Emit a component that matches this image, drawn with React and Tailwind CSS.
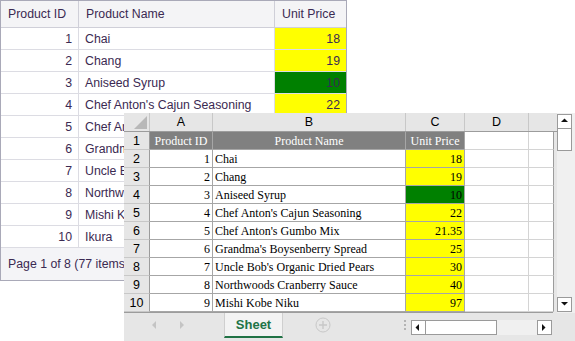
import React from 'react';

// rows shown in the data grid behind the spreadsheet
const gridRows = [
  { id: 1, name: 'Chai', price: 18 },
  { id: 2, name: 'Chang', price: 19 },
  { id: 3, name: 'Aniseed Syrup', price: 10 },
  { id: 4, name: "Chef Anton's Cajun Seasoning", price: 22 },
  { id: 5, name: "Chef Anton's Gumbo Mix", price: 21.35 },
  { id: 6, name: "Grandma's Boysenberry Spread", price: 25 },
  { id: 7, name: "Uncle Bob's Organic Dried Pears", price: 30 },
  { id: 8, name: 'Northwoods Cranberry Sauce', price: 40 },
  { id: 9, name: 'Mishi Kobe Niku', price: 97 },
  { id: 10, name: 'Ikura', price: 31 },
];

const sansFont = { fontFamily: '"Liberation Sans", Arial, sans-serif' };
const serifFont = { fontFamily: '"Liberation Serif", "Times New Roman", serif' };

function DataGrid() {
  return (
    <div className="w-[347px] border border-[#a9a9b8] bg-white text-[12.3px] leading-[15px] text-[#3b2a52]" style={sansFont}>
      <div className="flex h-[27px] border-b border-[#cfcfd8] bg-[#f4f4f6]">
        <div className="flex w-[78px] items-center border-r border-[#cfcfd8] px-[7px]">Product ID</div>
        <div className="flex w-[196px] items-center border-r border-[#cfcfd8] px-[7px]">Product Name</div>
        <div className="flex w-[71px] items-center px-[7px]">Unit Price</div>
      </div>
      {gridRows.map((row) => (
        <div key={row.id} className="flex h-[22px] border-b border-[#dcdce3]">
          <div className="flex w-[78px] items-center justify-end border-r border-[#dcdce3] px-[6px] pt-[1px]">{row.id}</div>
          <div className="flex w-[196px] items-center border-r border-[#dcdce3] px-[6px] pt-[1px]">{row.name}</div>
          <div
            className={`flex w-[71px] items-center justify-end px-[6px] pt-[1px] ${row.id === 3 ? 'bg-[#008000]' : 'bg-[#ffff00]'}`}
          >
            {row.price}
          </div>
        </div>
      ))}
      <div className="flex h-[32px] items-center bg-[#f4f4f7] px-[7px]">Page 1 of 8 (77 items)</div>
    </div>
  );
}

const cols = [
  { key: 'A', w: 'w-[63px]' },
  { key: 'B', w: 'w-[193px]' },
  { key: 'C', w: 'w-[59px]' },
  { key: 'D', w: 'w-[64px]' },
];

function ScrollButton({ dir }) {
  const points = {
    up: '2,6 5.5,2.5 9,6',
    down: '2,3 5.5,6.5 9,3',
    left: '6,2 2.5,5.5 6,9',
    right: '3,2 6.5,5.5 3,9',
  };
  return (
    <div className="flex h-[15px] w-[15px] shrink-0 items-center justify-center border border-[#9a9a9a] bg-white">
      <svg width="11" height="11" viewBox="0 0 11 11">
        <polygon points={points[dir]} fill="#111" />
      </svg>
    </div>
  );
}

function RowHead({ n }) {
  return (
    <div
      className="flex w-[26px] items-center justify-center border-r border-b border-r-[#9c9c9c] border-b-[#c8c8c8] bg-[#e6e6e6] text-[12.5px] leading-[14px] text-black"
      style={sansFont}
    >
      {n}
    </div>
  );
}

function Spreadsheet() {
  const sheetRows = gridRows.slice(0, 9);
  return (
    <div className="absolute left-[124px] top-[113px] flex h-[228px] w-[451px] flex-col bg-[#e6e6e6]">
      <div className="flex h-[200px]">
        <div className="flex w-[433px] flex-col">
          {/* column letters */}
          <div className="flex h-[19px] border-b border-[#9c9c9c] text-[12.5px] leading-[14px] text-black" style={sansFont}>
            <div className="relative w-[26px] border-r border-[#c8c8c8]">
              <svg className="absolute bottom-[2px] right-[2px]" width="13" height="13" viewBox="0 0 13 13">
                <polygon points="13,0 13,13 0,13" fill="#b8b8b8" />
              </svg>
            </div>
            {cols.map((c) => (
              <div key={c.key} className={`${c.w} flex items-center justify-center border-r border-[#c8c8c8]`}>
                {c.key}
              </div>
            ))}
            <div className="flex-1" />
          </div>
          {/* first row: table header */}
          <div className="flex h-[18px] text-[12px] leading-[14px]" style={serifFont}>
            <RowHead n={1} />
            <div className="flex w-[63px] items-center justify-center border-r border-b border-[#a6a6a6] bg-[#808080] text-white">Product ID</div>
            <div className="flex w-[193px] items-center justify-center border-r border-b border-[#a6a6a6] bg-[#808080] text-white">Product Name</div>
            <div className="flex w-[59px] items-center justify-center border-r border-b border-[#a6a6a6] bg-[#808080] text-white">Unit Price</div>
            <div className="w-[64px] border-r border-b border-[#d4d4d4] bg-white" />
            <div className="w-[25px] border-r border-b border-r-[#9c9c9c] border-b-[#d4d4d4] bg-white" />
          </div>
          {sheetRows.map((row, i) => (
            <div key={row.id} className="flex h-[18px] text-[12px] leading-[14px] text-black" style={serifFont}>
              <RowHead n={i + 2} />
              <div className="flex w-[63px] items-center justify-end border-r border-b border-[#a6a6a6] bg-white px-[2px]">{row.id}</div>
              <div className="flex w-[193px] items-center border-r border-b border-[#a6a6a6] bg-white px-[2px] whitespace-nowrap">{row.name}</div>
              <div
                className={`flex w-[59px] items-center justify-end border-r border-b border-[#a6a6a6] px-[2px] ${row.id === 3 ? 'bg-[#008000]' : 'bg-[#ffff00]'}`}
              >
                {row.price}
              </div>
              <div className="w-[64px] border-r border-b border-[#d4d4d4] bg-white" />
              <div className="w-[25px] border-r border-b border-r-[#9c9c9c] border-b-[#d4d4d4] bg-white" />
            </div>
          ))}
          <div className="h-[1px] w-[429px] bg-[#9c9c9c]" />
        </div>
        {/* vertical scrollbar */}
        <div className="flex w-[18px] flex-col bg-[#f0f0f0] pb-[1px] pt-[1px]">
          <ScrollButton dir="up" />
          <div className="-mt-[1px] h-[23px] w-[15px] border border-[#9a9a9a] bg-white" />
          <div className="flex-1" />
          <ScrollButton dir="down" />
        </div>
      </div>
      {/* sheet tabs */}
      <div className="flex h-[28px] items-start" style={sansFont}>
        <div className="flex h-[24px] w-[100px] items-center pl-[27px]">
          <svg width="6" height="8" viewBox="0 0 6 8">
            <polygon points="5,0 5,8 1,4" fill="#c4c4c4" />
          </svg>
          <svg className="ml-[22px]" width="6" height="8" viewBox="0 0 6 8">
            <polygon points="1,0 1,8 5,4" fill="#c4c4c4" />
          </svg>
        </div>
        <div className="flex h-[25px] w-[59px] items-center justify-center border-x border-b-2 border-x-[#cfcfcf] border-b-[#217346] bg-[#f3f3f3] text-[13px] font-bold leading-[15px] text-[#217346]">
          Sheet
        </div>
        <div className="flex h-[24px] w-[50px] items-center justify-end pr-[2px]">
          <svg width="16" height="16" viewBox="0 0 16 16">
            <circle cx="8" cy="8" r="7" fill="none" stroke="#c8c8c8" strokeWidth="1" />
            <path d="M8 4v8M4 8h8" stroke="#c8c8c8" strokeWidth="1.4" />
          </svg>
        </div>
        <div className="flex h-[24px] w-[78px] flex-col items-end justify-center gap-[2px] pr-[5px]">
          <div className="h-[2px] w-[2px] bg-[#b4b4b4]" />
          <div className="h-[2px] w-[2px] bg-[#b4b4b4]" />
          <div className="h-[2px] w-[2px] bg-[#b4b4b4]" />
        </div>
        <div className="mt-[7px] flex w-[141px] bg-[#f0f0f0]">
          <ScrollButton dir="left" />
          <div className="-ml-[1px] h-[15px] w-[72px] border border-[#9a9a9a] bg-white" />
          <div className="flex-1" />
          <ScrollButton dir="right" />
        </div>
      </div>
    </div>
  );
}

export default function App() {
  return (
    <div className="relative h-[341px] w-[575px] overflow-hidden bg-white">
      <DataGrid />
      <Spreadsheet />
    </div>
  );
}
